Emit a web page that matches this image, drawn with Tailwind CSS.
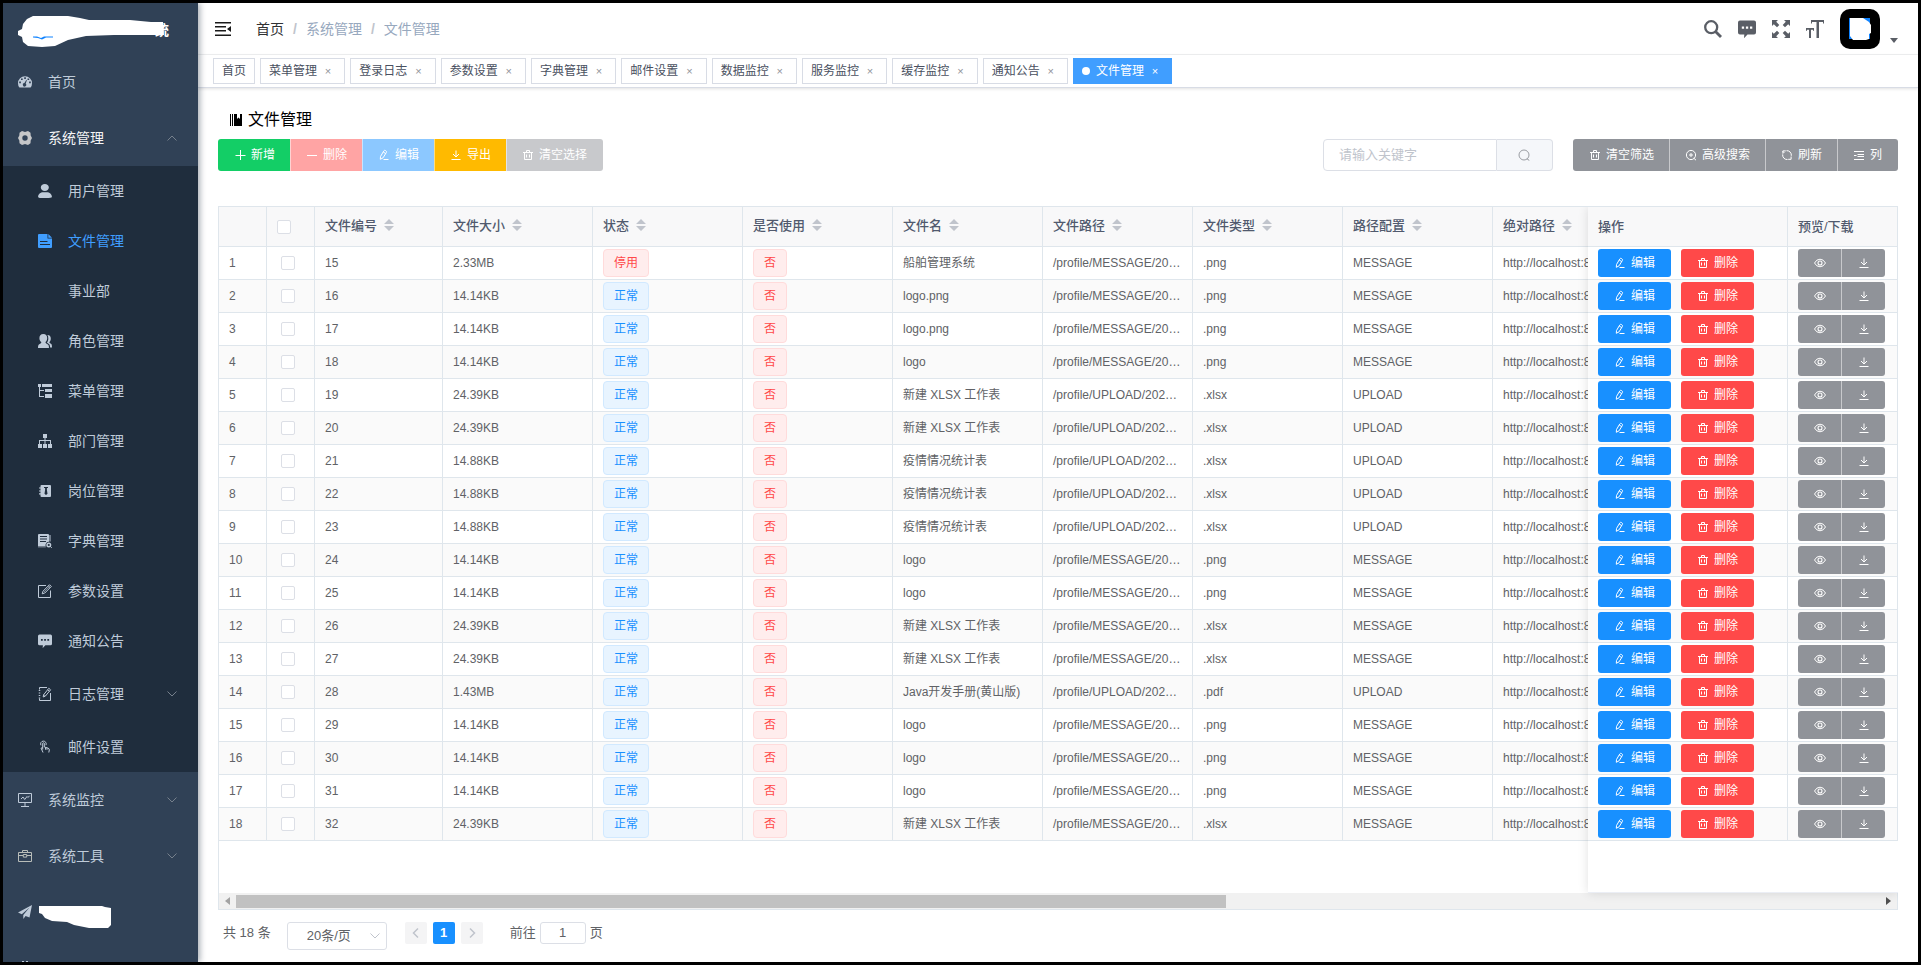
<!DOCTYPE html>
<html lang="zh-CN">
<head>
<meta charset="utf-8">
<title>文件管理</title>
<script src="https://cdn.jsdelivr.net/npm/@tailwindcss/browser@4"></script>
</head>
<body class="h-screen bg-white pr-[2px] pb-[3px] font-['Liberation_Sans','Noto_Sans_CJK_SC',sans-serif] text-[13px] text-[#606266]">
<svg width="0" height="0" class="hidden" aria-hidden="true">
  <symbol id="plus" viewBox="0 0 12 12"><path d="M6.500 1v10M1.500 6.500h10" stroke="currentColor" fill="none"/></symbol>
  <symbol id="minus" viewBox="0 0 12 12"><path d="M1 6.500h10" stroke="currentColor" fill="none"/></symbol>
  <symbol id="pen" viewBox="0 0 12 12"><path d="M2.300 10.300 2.500 7.500 5.800 1.900Q6.400 1 7.300 1.500L8 1.900Q8.900 2.500 8.400 3.400L5.100 8.800ZM5.200 3 7.800 4.600M5.500 10.500H10.500" stroke="currentColor" stroke-width="1" fill="none"/></symbol>
  <symbol id="download" viewBox="0 0 12 12"><path d="M6 1.500v6.500M3 5 6 8 9 5M1.500 10.500h9" stroke="currentColor" fill="none"/></symbol>
  <symbol id="trash" viewBox="0 0 12 12"><path d="M1 3.500h10M4.500 3V1.500h3V3M2.500 3.500v7h7v-7M4.500 5.500v3M7.500 5.500v3" stroke="currentColor" stroke-width="1" fill="none"/></symbol>
  <symbol id="search" viewBox="0 0 12 12"><circle cx="6" cy="6" r="5" stroke="currentColor" stroke-width=".9" fill="none"/><path d="M8.800 9.600 11.300 11.500" stroke="currentColor" stroke-width="1"/></symbol>
  <symbol id="zoomin" viewBox="0 0 12 12"><circle cx="6" cy="6" r="4.600" stroke="currentColor" stroke-width="1" fill="none"/><path d="M8.800 9.200 11 11.200M6 4v4M4 6h4" stroke="currentColor" stroke-width="1"/></symbol>
  <symbol id="refresh" viewBox="0 0 12 12"><path d="M4.800 1.900H1.900v2.800M2 2.600Q4 4.600 2 2.600M7.200 10.300h2.900V7.500M5.500 1.700A4.400 4.400 0 0 1 10.300 6.800M6.500 10.500A4.400 4.400 0 0 1 1.700 5.400" stroke="currentColor" stroke-width="1" fill="none"/></symbol>
  <symbol id="columns" viewBox="0 0 12 12"><path d="M1 2.500h10M4.500 5.500h6.500M4.500 7.500h6.500M1 10.500h10M1 6.500h2.500" stroke="currentColor" stroke-width="1" fill="none"/></symbol>
  <symbol id="eye" viewBox="0 0 12 12"><path d="M.500 6Q2.500 2.200 6 2.200T11.500 6Q9.500 9.800 6 9.800T.500 6Z" stroke="currentColor" stroke-width="1" fill="none"/><circle cx="6" cy="6" r="2" stroke="currentColor" stroke-width="1.100" fill="none"/></symbol>
  <symbol id="down" viewBox="0 0 12 12"><path d="M1.500 3.500 6 8 10.500 3.500" stroke="currentColor" fill="none"/></symbol>
  <symbol id="msg" viewBox="0 0 18 18"><path fill="currentColor" fill-rule="evenodd" d="M2 .5h14a2 2 0 0 1 2 2v10a2 2 0 0 1-2 2H9.500L6 18.200 6.300 14.500H2a2 2 0 0 1-2-2v-10a2 2 0 0 1 2-2ZM3.800 6.500v2.300h2.300V6.500ZM7.900 6.500v2.300h2.300V6.500ZM12 6.500v2.300h2.300V6.500Z"/></symbol>
</svg>

<div class="flex h-full overflow-hidden border-[3px] border-black bg-white">

  <!-- Sidebar -->
  <aside class="relative z-20 h-full w-[195px] shrink-0 overflow-hidden bg-[#304156] text-sm text-[#bfcbd9] shadow-[2px_0_6px_rgba(0,21,41,0.35)]">
    <div class="h-[51px] pt-3 pl-[15px]">
      <svg width="156" height="34" viewBox="0 0 156 34" role="img" aria-label="Logo">
        <text x="137" y="20" font-size="14" font-weight="bold" fill="#fff">统</text>
        <path d="M0 16 4 14 5 9 9 4 15 1 50 1 62 3 71 5 112 5 133 7 145 7 146 20H96L68 21 50 25 37 31 24 32 10 31 5 27 4 22 0 20Z" fill="#fff"/>
        <path d="M15 21.500h4l4 1.500 3-1.500h9v1h-7l-4 2-4-1.500-5-.500Z" fill="#1083ff"/>
      </svg>
    </div>
    <nav>
      <a href="#" class="flex h-14 items-center gap-4 pl-[15px]"><svg class="size-3.5" viewBox="0 0 14 14"><path fill="currentColor" fill-rule="evenodd" d="M7 1.200a7 7 0 0 1 7 7Q14 10.800 12.600 12.600H1.400Q0 10.800 0 8.200A7 7 0 0 1 7 1.200ZM1.200 8.300h1.700V6.600H1.200ZM3 5.100h1.700V3.400H3ZM6.200 4h1.700V2.300H6.200ZM9.500 5.100h1.700V3.400H9.500ZM11.100 8.300h1.700V6.600h-1.700ZM8.300 5 6.400 8.100A1.700 1.700 0 1 0 7.700 8.500L8.900 5.200Z"/></svg>首页</a>
      <a href="#" class="flex h-14 items-center gap-4 pr-5 pl-[15px] text-[#f4f4f5]"><svg class="size-3.5 text-[#c5c6c8]" viewBox="0 0 14 14"><path fill="currentColor" fill-rule="evenodd" d="M4 0 7 1 10 0 12.500 1.700 12.700 4.500 14 7l-1.300 2.500-.2 2.800L10 14 7 13l-3 1-2.500-1.700-.2-2.800L0 7l1.300-2.500.2-2.800ZM7 4.300A2.700 2.700 0 1 0 7 9.700 2.700 2.700 0 0 0 7 4.300Z"/></svg><span class="flex-1">系统管理</span><svg class="size-3 rotate-180 text-[#76808c]"><use href="#down"/></svg></a>
      <div class="bg-[#1f2d3d]">
        <a href="#" class="flex h-[50px] items-center gap-4 pl-[35px]"><svg class="size-3.5" viewBox="0 0 130 130"><path fill="currentColor" d="M63.400 65c20.600 0 37.400-14.300 37.400-32S84.100 1 63.400 1 26 15.400 26 33s16.800 32 37.400 32zM80.600 75.600H49.400C22.800 75.600 1.200 94.100 1.200 117v2.600c0 9.300 21.600 9.300 48.200 9.300h31.200c26.600 0 48.200-.3 48.200-9.300V117c0-22.900-21.600-41.400-48.200-41.400z"/></svg>用户管理</a>
        <a href="#" class="flex h-[50px] items-center gap-4 pl-[35px] text-[#409eff]" aria-current="page"><svg class="size-3.5" viewBox="0 0 14 14"><path fill="currentColor" fill-rule="evenodd" d="M1 0H9.500v4.500H14V13a1 1 0 0 1-1 1H1a1 1 0 0 1-1-1V1a1 1 0 0 1 1-1ZM2 7v1h7.500V7ZM2 10v1h10v-1ZM10.300 0 14 3.700h-3.700Z"/></svg>文件管理</a>
        <a href="#" class="flex h-[50px] items-center pl-[65px]">事业部</a>
        <a href="#" class="flex h-[50px] items-center gap-4 pl-[35px]"><svg class="size-3.5" viewBox="0 0 14 14"><path fill="currentColor" d="M5.300 0C8 0 9.300 1.800 9.200 4.200 9.100 6 8.300 7.500 7.500 8c0 1 .3 1.200 1.600 1.900 1.300.6 1.800 1 1.900 4.100H0c0-2.600.4-3.500 1.700-4.100C3 9.200 3.400 9 3.300 8 2.200 7.300 1.400 6 1.400 4.200 1.400 1.800 2.600 0 5.300 0ZM9.600.9C11.700.9 12.900 2.500 12.800 4.700c0 1.500-.7 2.800-1.400 3.300 0 .8.200 1 1.200 1.600 1 .5 1.400 1.100 1.400 3.900h-1.900c-.1-2.600-.700-3.400-1.900-4-.8-.4-1.200-.7-1.200-1.100.8-.9 1.300-2.300 1.300-4 0-1.300-.3-2.500-.9-3.400Z"/></svg>角色管理</a>
        <a href="#" class="flex h-[50px] items-center gap-4 pl-[35px]"><svg class="size-3.5" viewBox="0 0 14 14"><path fill="currentColor" d="M0 0h3v3H2v3h4v1H2v5h4v1H1V3H0ZM4 0h10v3H4ZM7 5h7v3H7ZM7 10h7v4H7Z"/></svg>菜单管理</a>
        <a href="#" class="flex h-[50px] items-center gap-4 pl-[35px]"><svg class="size-3.5" viewBox="0 0 14 14"><path fill="currentColor" d="M5 0h4v4H7.500v2H13v4h1v4h-4v-4h2V7H7.500v3H9v4H5v-4h1.500V7H2v3h2v4H0v-4h1V6h5.500V4H5Z"/></svg>部门管理</a>
        <a href="#" class="flex h-[50px] items-center gap-4 pl-[35px]"><svg class="size-3.5" viewBox="0 0 14 14"><path fill="currentColor" fill-rule="evenodd" d="M3.500 1H12a1 1 0 0 1 1 1v10a1 1 0 0 1-1 1H3.500a1 1 0 0 1-1-1V10.500H1V9.300h1.500V7.600H1V6.400h1.500V4.600H1V3.400h1.500V2a1 1 0 0 1 1-1ZM6 3v1h1.100v2L6.500 9.700 8 11l1.500-1.300L8.900 6V4H10V3Z"/></svg>岗位管理</a>
        <a href="#" class="flex h-[50px] items-center gap-4 pl-[35px]"><svg class="size-3.5" viewBox="0 0 14 14"><path fill="currentColor" fill-rule="evenodd" d="M1 0h9a1 1 0 0 1 1 1v6.800A3.400 3.400 0 0 0 7.600 12H0V1a1 1 0 0 1 1-1ZM2 2v1h7V2ZM2 4.500v1h7v-1ZM2 7v1h6V7ZM10.800 8.500a2.500 2.500 0 1 1 0 5 2.500 2.500 0 0 1 0-5ZM10.800 9.900a1.100 1.100 0 1 0 0 2.200 1.100 1.100 0 0 0 0-2.200ZM0 12.500h7.800v.7H0Z"/><path stroke="currentColor" d="M12 1v6.500M12.500 12.600 13.800 13.800" fill="none"/></svg>字典管理</a>
        <a href="#" class="flex h-[50px] items-center gap-4 pl-[35px]"><svg class="size-3.5" viewBox="0 0 14 14"><path fill="none" stroke="currentColor" d="M8 1.500H.5v12h12V6.500M4.200 9.800 5 7.200 11.500.7 13.300 2.500 6.800 9Z"/><path stroke="currentColor" stroke-width=".6" d="M5.900 8.100 12.200 1.800M10.200 2l1.800 1.800"/></svg>参数设置</a>
        <a href="#" class="flex h-[50px] items-center gap-4 pl-[35px]"><svg class="size-3.5"><use href="#msg"/></svg>通知公告</a>
        <a href="#" class="flex h-14 items-center gap-4 pr-5 pl-[35px]"><svg class="size-3.5" viewBox="0 0 14 14"><path fill="none" stroke="currentColor" d="M9 .500H1.500v2M12.500 6v7.500h-11v-2"/><path fill="none" stroke="currentColor" stroke-dasharray="1 1.500" stroke-width="1.500" d="M1.500 3v9"/><path fill="none" stroke="currentColor" stroke-width="1" d="M5.200 10 5.600 7.800 10.800 1.300 12.600 2.800 7.300 9.200ZM9.700 2.900 11.400 4.300M6 7.600 7.300 8.900"/></svg><span class="flex-1">日志管理</span><svg class="size-3 text-[#76808c]"><use href="#down"/></svg></a>
        <a href="#" class="flex h-[50px] items-center gap-4 pl-[35px]"><svg class="size-3.5" viewBox="0 0 14 14"><path fill="none" stroke="currentColor" stroke-width="1" d="M3 5.300A2.800 2.800 0 1 1 7.900 5.200M4.700 9.500V3.200Q5.500 2.200 6.300 3.200V7L9.800 8Q11.500 8.500 11.300 10L10.800 12.500M4.800 7.500 3 8.200 4.400 11 5 12.500M7.500 7.500v2.200M9 7.800v2"/></svg>邮件设置</a>
      </div>
      <a href="#" class="flex h-14 items-center gap-4 pr-5 pl-[15px]"><svg class="size-3.5" viewBox="0 0 14 14"><path fill="none" stroke="currentColor" stroke-width="1" d="M.5.500h13v9H.5ZM7 9.500v3.500M3 13.500h8M3 6 5 4 6.700 6.500 9 3.500 10 4.500 11.500 2.800"/></svg><span class="flex-1">系统监控</span><svg class="size-3 text-[#76808c]"><use href="#down"/></svg></a>
      <a href="#" class="flex h-14 items-center gap-4 pr-5 pl-[15px]"><svg class="size-3.5 text-[#b8bdb9]" viewBox="0 0 14 14"><path fill="none" stroke="currentColor" stroke-width="1" d="M.500 3.500h13v9H.500ZM4.500 3.500V1.500h5v2M.5 6.500h4.500M9 6.500h4.500M5.300 5.500h3.400v2.600H5.300Z"/></svg><span class="flex-1">系统工具</span><svg class="size-3 text-[#76808c]"><use href="#down"/></svg></a>
      <a href="#" aria-label="官网" class="flex h-14 items-center gap-[7px] pl-[15px]"><svg class="size-3.5" viewBox="0 0 14 14"><path fill="currentColor" d="M14 0 0 7.500 3.800 9.200 11.500 2.600 5.300 9.900V14L7.600 10.900 11.500 12.500Z"/></svg><svg class="mt-2.5" width="72" height="22" viewBox="0 0 72 22"><path fill="#fff" d="M0 0H63L66 1 72 2V19L69 22H50L35 19 28 16 13 15 6 12 3 8 0 7Z"/></svg></a>
      <a href="#" aria-label="更多" class="flex h-14 items-center pl-[15px]"><svg class="size-3.5" viewBox="0 0 14 14"><path fill="currentColor" d="M4 0h2v1H4ZM8 0h2v1H8ZM2 3h10v10H2Z"/></svg></a>
    </nav>
  </aside>

  <!-- Main column -->
  <main class="flex min-w-0 flex-1 flex-col">
    <header class="flex h-[52px] shrink-0 items-center border-b border-[#f0f1f2] pr-5 pl-[17px]">
      <button aria-label="折叠菜单"><svg width="16" height="14" viewBox="0 0 16 14"><path fill="#1a1a1a" d="M0 0h16v1.500H0ZM0 4h11v1.500H0ZM0 8h11v1.500H0ZM0 12.500h16V14H0ZM12 7l4-3v6Z"/></svg></button>
      <nav class="ml-[25px] flex items-center gap-[9px] text-sm text-[#97a8be]">
        <a href="#" class="text-[#303133]">首页</a><span class="font-bold text-[#c0c4cc]">/</span><span>系统管理</span><span class="font-bold text-[#c0c4cc]">/</span><span>文件管理</span>
      </nav>
      <div class="ml-auto flex items-center gap-4 text-[#5a5e66]">
        <button aria-label="搜索"><svg class="block size-[18px]" viewBox="0 0 18 18"><circle cx="7.200" cy="7.200" r="6" fill="none" stroke="currentColor" stroke-width="2.300"/><path d="M11.500 11.500 17 17" stroke="currentColor" stroke-width="2.800"/></svg></button>
        <button aria-label="消息"><svg class="block size-[18px]"><use href="#msg"/></svg></button>
        <button aria-label="全屏"><svg class="block size-[18px]" viewBox="0 0 18 18"><path fill="currentColor" d="M0 0h6L4.200 1.800 7.300 5 5 7.300 1.800 4.200 0 6ZM18 0v6L16.200 4.200 13 7.300 10.700 5 13.800 1.800 12 0ZM0 18v-6l1.800 1.800L5 10.700 7.300 13 4.200 16.200 6 18ZM18 18h-6l1.800-1.800L10.700 13 13 10.700l3.200 3.100L18 12Z"/></svg></button>
        <button aria-label="字号"><svg class="block size-[18px]" viewBox="0 0 18 18"><path fill="currentColor" d="M5 0h13v3.500h-1V2H13v16h-2.500V2H6v1.500H5ZM0 8h8v2.800H7V9.800H5V18H3V9.800H1v1H0Z"/></svg></button>
        <button class="flex items-end gap-2.5" aria-label="用户菜单">
          <span class="flex size-10 items-center justify-center rounded-[10px] bg-black"><svg width="22" height="22" viewBox="0 0 22 22"><path fill="#1083ff" d="M0 0h21v21H0Z"/><path fill="#fff" d="M1 0h13l6 4 2 3v8l-2 1v5l-3 1H4l-3-4Z"/></svg></span>
          <svg class="mb-1.5" width="8" height="5" viewBox="0 0 8 5"><path fill="currentColor" d="M0 0h8L4 5Z"/></svg>
        </button>
      </div>
    </header>

    <nav class="relative z-10 flex h-[33px] shrink-0 gap-[5px] border-b border-[#d8dce5] bg-white pt-[3px] pl-[15px] text-xs text-[#495060] shadow-[0_1px_3px_rgba(0,0,0,0.12)]">
      <a href="#" class="flex h-[26px] items-center border border-[#d8dce5] px-2">首页</a>
      <div id="tabs" class="grid w-[808px] grid-cols-9 gap-[5px]"></div>
      <a href="#" class="flex h-[26px] items-center gap-1.5 bg-[#409eff] px-[9px] text-white"><span class="size-2 rounded-full bg-white"></span>文件管理<span class="ml-[-3px] w-4 text-center text-[11px]">×</span></a>
    </nav>

    <section class="flex min-h-0 flex-1 flex-col px-5 pt-5 pb-3">
      <h1 class="flex h-6 shrink-0 items-center gap-1.5 pl-3 text-base text-black"><svg width="12" height="12" viewBox="0 0 12 12"><path fill="currentColor" d="M0 0h1v12H0ZM2 0h1v12H2ZM4 0h3v5L8.500 3.500 10 5V0H12v12H4Z"/></svg>文件管理</h1>

      <div class="mt-[7px] flex h-8 shrink-0 items-stretch text-xs text-white">
        <div class="flex">
          <button class="flex items-center gap-[5px] rounded-l-[3px] bg-[#13ce66] px-4"><svg class="size-3"><use href="#plus"/></svg>新增</button>
          <button class="-ml-px flex items-center gap-[5px] border-l border-white/50 bg-[#ffa4a4] px-[15px] pr-4"><svg class="size-3"><use href="#minus"/></svg>删除</button>
          <button class="-ml-px flex items-center gap-[5px] border-l border-white/50 bg-[#8cc8ff] px-[15px] pr-4"><svg class="size-3"><use href="#pen"/></svg>编辑</button>
          <button class="-ml-px flex items-center gap-[5px] border-l border-white/50 bg-[#ffba00] px-[15px] pr-4"><svg class="size-3"><use href="#download"/></svg>导出</button>
          <button class="-ml-px flex items-center gap-[5px] rounded-r-[3px] border-l border-white/50 bg-[#c8c9cc] px-[15px] pr-4"><svg class="size-3"><use href="#trash"/></svg>清空选择</button>
        </div>
        <form class="ml-auto flex w-[230px]">
          <input type="text" aria-label="关键字" placeholder="请输入关键字" class="min-w-0 flex-1 rounded-l-[4px] border border-[#dcdfe6] px-[15px] text-[13px] text-[#606266] placeholder:text-[#c0c4cc]">
          <button type="button" aria-label="搜索" class="flex w-14 items-center justify-center rounded-r-[4px] border border-l-0 border-[#dcdfe6] bg-[#f5f7fa] text-[#909399]"><svg class="size-3"><use href="#search"/></svg></button>
        </form>
        <div class="ml-5 flex">
          <button class="flex items-center gap-[5px] rounded-l-[3px] bg-[#909399] px-4"><svg class="size-3"><use href="#trash"/></svg>清空筛选</button>
          <button class="-ml-px flex items-center gap-[5px] border-l border-white/50 bg-[#909399] px-[15px] pr-4"><svg class="size-3"><use href="#zoomin"/></svg>高级搜索</button>
          <button class="-ml-px flex items-center gap-[5px] border-l border-white/50 bg-[#909399] px-[15px] pr-4"><svg class="size-3"><use href="#refresh"/></svg>刷新</button>
          <button class="-ml-px flex items-center gap-[5px] rounded-r-[3px] border-l border-white/50 bg-[#909399] px-[15px] pr-4"><svg class="size-3"><use href="#columns"/></svg>列</button>
        </div>
      </div>

      <!-- Data grid: scrolling part and pinned part -->
      <div class="mt-[35px] flex min-h-0 flex-1 flex-col overflow-hidden border border-r-0 border-[#dfe6ec]">
        <div class="flex min-h-0 flex-1 text-xs">
          <div class="min-w-0 flex-1 overflow-hidden">
            <table class="w-[1424px] table-fixed border-separate border-spacing-0">
              <colgroup><col class="w-12"><col class="w-12"><col class="w-[128px]"><col class="w-[150px]"><col class="w-[150px]"><col class="w-[150px]"><col class="w-[150px]"><col class="w-[150px]"><col class="w-[150px]"><col class="w-[150px]"><col class="w-[150px]"></colgroup>
              <thead><tr id="head" class="h-10 bg-[#f8f8f9]"></tr></thead>
              <tbody id="rows"></tbody>
            </table>
          </div>
          <div class="relative z-10 w-[310px] shrink-0 border-b border-[#ebeef5] bg-white shadow-[0_0_10px_rgba(0,0,0,0.12)]">
            <table class="w-full table-fixed border-separate border-spacing-0">
              <colgroup><col class="w-[200px]"><col class="w-[110px]"></colgroup>
              <thead><tr class="h-10 bg-[#f8f8f9] text-left text-[13px] text-[#515a6e]"><th class="border-r border-b border-[#dfe6ec] px-2.5 font-medium">操作</th><th class="border-r border-b border-[#dfe6ec] px-2.5 font-medium">预览/下载</th></tr></thead>
              <tbody id="actions"></tbody>
            </table>
          </div>
        </div>
        <div class="flex h-4 shrink-0 items-center justify-between border-r border-[#dfe6ec] bg-[#f1f1f1] px-1.5">
          <svg width="5" height="8" viewBox="0 0 5 8"><path fill="#a3a3a3" d="M5 0v8L0 4Z"/></svg>
          <div class="ml-1.5 flex flex-1"><div class="h-[13px] w-3/5 bg-[#c1c1c1]"></div></div>
          <svg width="5" height="8" viewBox="0 0 5 8"><path fill="#505050" d="M0 0v8L5 4Z"/></svg>
        </div>
      </div>

      <div class="mt-3 flex h-7 shrink-0 items-start pl-[5px] text-[13px] leading-[22px]">
        <span>共 18 条</span>
        <div class="relative ml-4">
          <select aria-label="每页条数" class="h-7 w-[100px] appearance-none rounded-[3px] border border-[#dcdfe6] bg-white pl-[19px] text-[13px] text-[#606266]"><option>20条/页</option></select>
          <svg class="pointer-events-none absolute top-2 right-1.5 size-3 text-[#c0c4cc]"><use href="#down"/></svg>
        </div>
        <button aria-label="上一页" class="ml-[18px] flex size-[22px] items-center justify-center rounded-[2px] bg-[#f4f4f5] text-[#c0c4cc]"><svg width="12" height="12" viewBox="0 0 12 12"><path d="M8 1.500 3.500 6 8 10.500" fill="none" stroke="currentColor" stroke-width="1.500"/></svg></button>
        <button class="ml-1.5 size-[22px] rounded-[2px] bg-[#1890ff] font-bold text-white">1</button>
        <button aria-label="下一页" class="ml-1.5 flex size-[22px] items-center justify-center rounded-[2px] bg-[#f4f4f5] text-[#c0c4cc]"><svg width="12" height="12" viewBox="0 0 12 12"><path d="M4 1.500 8.500 6 4 10.500" fill="none" stroke="currentColor" stroke-width="1.500"/></svg></button>
        <label class="ml-[27px] flex gap-1">前往<input type="text" value="1" class="h-[22px] w-[46px] rounded-[3px] border border-[#dcdfe6] text-center text-[13px]">页</label>
      </div>
    </section>
  </main>
</div>

<script>
  const tabs = ['菜单管理', '登录日志', '参数设置', '字典管理', '邮件设置', '数据监控', '服务监控', '缓存监控', '通知公告'];
  document.getElementById('tabs').innerHTML = tabs.map(t =>
    `<a href="#" class="flex h-[26px] items-center gap-[3px] border border-[#d8dce5] pl-2 whitespace-nowrap">${t}<span class="w-4 text-center text-[11px] text-[#909399]">×</span></a>`).join('');

  const heads = ['文件编号', '文件大小', '状态', '是否使用', '文件名', '文件路径', '文件类型', '路径配置', '绝对路径'];
  const box = '<input type="checkbox" aria-label="选择" class="block size-3.5 appearance-none rounded-[2px] border border-[#dcdfe6] bg-white">';
  const th = 'border-r border-b border-[#dfe6ec] pl-2.5 text-left text-[13px] font-medium text-[#515a6e]';
  document.getElementById('head').innerHTML =
    `<th class="${th}"></th><th class="${th}">${box}</th>` +
    heads.map(h => `<th class="${th}"><span class="flex items-center gap-[7px] pb-[2px]">${h}<svg width="10" height="12" viewBox="0 0 10 12"><path fill="#c0c4cc" d="M5 0 10 5H0ZM0 7h10L5 12Z"/></svg></span></th>`).join('');

  const X = '新建 XLSX 工作表', Y = '疫情情况统计表';
  const data = [
    ['2.33MB', '船舶管理系统', 'M', '.png'], ['14.14KB', 'logo.png', 'M', '.png'], ['14.14KB', 'logo.png', 'M', '.png'],
    ['14.14KB', 'logo', 'M', '.png'], ['24.39KB', X, 'U', '.xlsx'], ['24.39KB', X, 'U', '.xlsx'],
    ['14.88KB', Y, 'U', '.xlsx'], ['14.88KB', Y, 'U', '.xlsx'], ['14.88KB', Y, 'U', '.xlsx'],
    ['14.14KB', 'logo', 'M', '.png'], ['14.14KB', 'logo', 'M', '.png'], ['24.39KB', X, 'M', '.xlsx'],
    ['24.39KB', X, 'M', '.xlsx'], ['1.43MB', 'Java开发手册(黄山版)', 'U', '.pdf'], ['14.14KB', 'logo', 'M', '.png'],
    ['14.14KB', 'logo', 'M', '.png'], ['14.14KB', 'logo', 'M', '.png'], ['24.39KB', X, 'M', '.xlsx']
  ];
  const td = 'border-r border-b border-[#dfe6ec] pl-2.5 whitespace-nowrap';
  const red = 'flex h-7 w-fit items-center rounded-[4px] border border-[#ffdbdb] bg-[#ffeded] px-2.5 text-[#ff4949]';
  const blue = 'flex h-7 w-fit items-center rounded-[4px] border border-[#d1e9ff] bg-[#e8f4ff] px-2.5 text-[#1890ff]';
  document.getElementById('rows').innerHTML = data.map(([size, name, kind, ext], i) => {
    const path = kind === 'M' ? '/profile/MESSAGE/20…' : '/profile/UPLOAD/202…';
    const cfg = kind === 'M' ? 'MESSAGE' : 'UPLOAD';
    return `<tr class="h-[33px] even:bg-[#fafafa]">
      <td class="${td}">${i + 1}</td><td class="border-r border-b border-[#dfe6ec] pl-3.5">${box}</td><td class="${td}">${i + 15}</td><td class="${td}">${size}</td>
      <td class="${td}"><span class="${i ? blue : red}">${i ? '正常' : '停用'}</span></td><td class="${td}"><span class="${red}">否</span></td>
      <td class="${td}">${name}</td><td class="${td}">${path}</td><td class="${td}">${ext}</td><td class="${td}">${cfg}</td><td class="${td}">http://localhost:8</td></tr>`;
  }).join('');

  document.getElementById('actions').innerHTML = data.map(() =>
    `<tr class="h-[33px] even:bg-[#fafafa]">
      <td class="border-r border-b border-[#dfe6ec] pl-2.5"><div class="flex gap-2.5 text-white">
        <button class="flex h-7 items-center gap-[5px] rounded-[3px] bg-[#1890ff] px-4"><svg class="size-3"><use href="#pen"/></svg>编辑</button>
        <button class="flex h-7 items-center gap-[5px] rounded-[3px] bg-[#ff4949] px-4"><svg class="size-3"><use href="#trash"/></svg>删除</button></div></td>
      <td class="border-r border-b border-[#dfe6ec] pl-2.5"><div class="flex text-white">
        <button aria-label="预览" class="flex h-7 w-11 items-center justify-center rounded-l-[3px] bg-[#909399]"><svg class="size-3"><use href="#eye"/></svg></button>
        <button aria-label="下载" class="-ml-px flex h-7 w-11 items-center justify-center rounded-r-[3px] border-l border-white/50 bg-[#909399]"><svg class="size-3"><use href="#download"/></svg></button></div></td></tr>`).join('');
</script>
</body>
</html>
